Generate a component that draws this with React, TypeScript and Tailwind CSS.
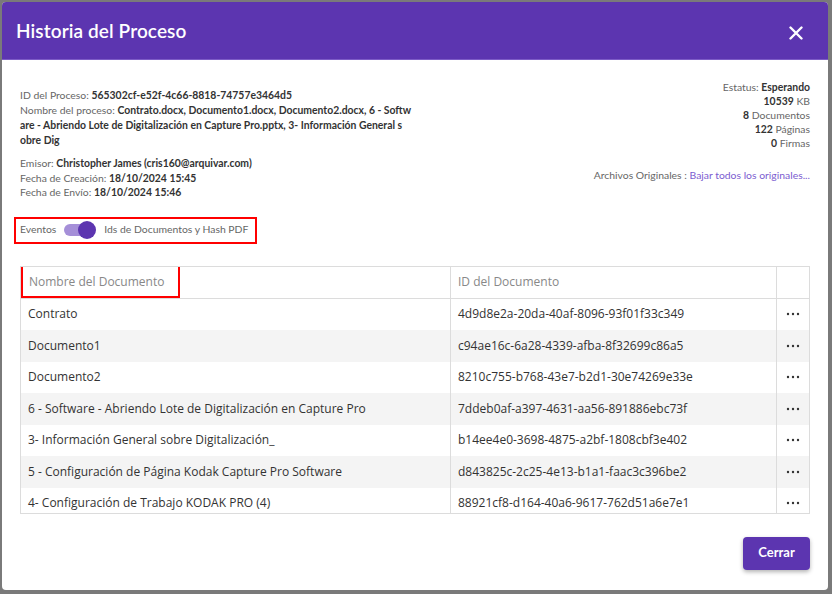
import React from "react";

const rows = [
  ["Contrato", "4d9d8e2a-20da-40af-8096-93f01f33c349"],
  ["Documento1", "c94ae16c-6a28-4339-afba-8f32699c86a5"],
  ["Documento2", "8210c755-b768-43e7-b2d1-30e74269e33e"],
  ["6 - Software - Abriendo Lote de Digitalización en Capture Pro", "7ddeb0af-a397-4631-aa56-891886ebc73f"],
  ["3- Información General sobre Digitalización_", "b14ee4e0-3698-4875-a2bf-1808cbf3e402"],
  ["5 - Configuración de Página Kodak Capture Pro Software", "d843825c-2c25-4e13-b1a1-faac3c396be2"],
  ["4- Configuración de Trabajo KODAK PRO (4)", "88921cf8-d164-40a6-9617-762d51a6e7e1"],
];

function Dots() {
  return (
    <svg width="14" height="4" viewBox="0 0 14 4">
      <circle cx="2" cy="2" r="1.2" fill="#333" />
      <circle cx="7" cy="2" r="1.2" fill="#333" />
      <circle cx="12" cy="2" r="1.2" fill="#333" />
    </svg>
  );
}

export default function App() {
  return (
    <div className="w-[832px] h-[594px] bg-[#7a7a7a] pl-[2px] pt-[2px] overflow-hidden">
      <div
        className="w-[826px] h-[588px] bg-white rounded-[4px] overflow-hidden flex flex-col"
        style={{ fontFamily: "Lato, 'Noto Sans', sans-serif" }}
      >
        <div className="h-[58px] bg-[#5c35b0] border-b border-[#7d5cc6] flex items-center justify-between pl-[14px] pr-[25px] shrink-0">
          <div className="text-white text-[19px] font-semibold tracking-[0.1px] mt-[2px]">Historia del Proceso</div>
          <svg width="14" height="14" viewBox="0 0 14 14" className="mt-[4px]">
            <path d="M1.5 1.5 L12.5 12.5 M12.5 1.5 L1.5 12.5" stroke="white" strokeWidth="2.4" strokeLinecap="round" />
          </svg>
        </div>

        <div className="flex-1 flex flex-col px-[18px]">
          <div className="flex justify-between pt-[28px]">
            <div className="w-[400px] text-[10.4px] leading-[15px] text-[#666]">
              <div>
                ID del Proceso: <span className="font-bold text-[#333]">565302cf-e52f-4c66-8818-74757e3464d5</span>
              </div>
              <div className="whitespace-nowrap">
                Nombre del proceso:{" "}
                <span className="font-bold text-[#333]">
                  Contrato.docx, Documento1.docx, Documento2.docx, 6 - Softw
                  <br />
                  are - Abriendo Lote de Digitalización en Capture Pro.pptx, 3- Información General s
                  <br />
                  obre Dig
                </span>
              </div>
              <div className="mt-[8px] leading-[14.5px]">
                Emisor: <span className="font-bold text-[#333]">Christopher James (cris160@arquivar.com)</span>
              </div>
              <div className="leading-[14.5px]">
                Fecha de Creación: <span className="font-bold text-[#333]">18/10/2024 15:45</span>
              </div>
              <div className="leading-[14.5px]">
                Fecha de Envío: <span className="font-bold text-[#333]">18/10/2024 15:46</span>
              </div>
            </div>
            <div className="flex flex-col items-end text-[10.4px] leading-[14px] text-[#666] -mt-[8px]">
              <div>
                Estatus: <span className="font-bold text-[#333]">Esperando</span>
              </div>
              <div>
                <span className="font-bold text-[#333]">10539</span> KB
              </div>
              <div>
                <span className="font-bold text-[#333]">8</span> Documentos
              </div>
              <div>
                <span className="font-bold text-[#333]">122</span> Páginas
              </div>
              <div>
                <span className="font-bold text-[#333]">0</span> Firmas
              </div>
              <div className="mt-[18px]">
                Archivos Originales : <span className="text-[#7b5cd0]">Bajar todos los originales...</span>
              </div>
            </div>
          </div>

          <div className="mt-[17px] -ml-[6px] w-[243px] h-[27px] border-2 border-[#ff0000] flex items-center pl-[4px] text-[10.4px] text-[#666]">
            <span>Eventos</span>
            <div className="relative w-[32px] h-[20px] ml-[8px] flex items-center">
              <div className="w-[26px] h-[12px] rounded-full bg-[#a58fd8]" />
              <div className="absolute right-0 top-[1px] w-[18px] h-[18px] rounded-full bg-[#5c35b0]" />
            </div>
            <span className="ml-[8px]">Ids de Documentos y Hash PDF</span>
          </div>

          <div
            className="mt-[22px] w-[790px] h-[248px] overflow-hidden border border-[#dcdcdc]"
            style={{ fontFamily: "'Open Sans', 'Noto Sans', sans-serif" }}
          >
            <div className="flex h-[32px] border-b border-[#dcdcdc] text-[12px] text-[#888]">
              <div className="w-[430px] border-r border-[#dcdcdc] flex items-center">
                <div className="h-[33px] -mt-[1px] w-[159px] border-2 border-[#ff0000] flex items-center pl-[6px]">
                  Nombre del Documento
                </div>
              </div>
              <div className="w-[326px] border-r border-[#dcdcdc] flex items-center pl-[7px]">ID del Documento</div>
              <div className="flex-1" />
            </div>
            {rows.map(([name, id], i) => (
              <div
                key={id}
                className={`flex h-[31.5px] text-[12px] text-[#333] ${i % 2 === 1 ? "bg-[#f4f4f4]" : "bg-white"}`}
              >
                <div className="w-[430px] border-r border-[#dcdcdc] flex items-center pl-[7px]">{name}</div>
                <div className="w-[326px] border-r border-[#dcdcdc] flex items-center pl-[7px]">{id}</div>
                <div className="flex-1 flex items-center justify-center">
                  <Dots />
                </div>
              </div>
            ))}
          </div>

          <div className="flex justify-end mt-[23px]">
            <button className="w-[67px] h-[33px] rounded-[4px] bg-[#5c35b0] text-white text-[13px] font-bold shadow-[0_2px_4px_rgba(0,0,0,0.3)]">
              Cerrar
            </button>
          </div>
        </div>
      </div>
    </div>
  );
}
